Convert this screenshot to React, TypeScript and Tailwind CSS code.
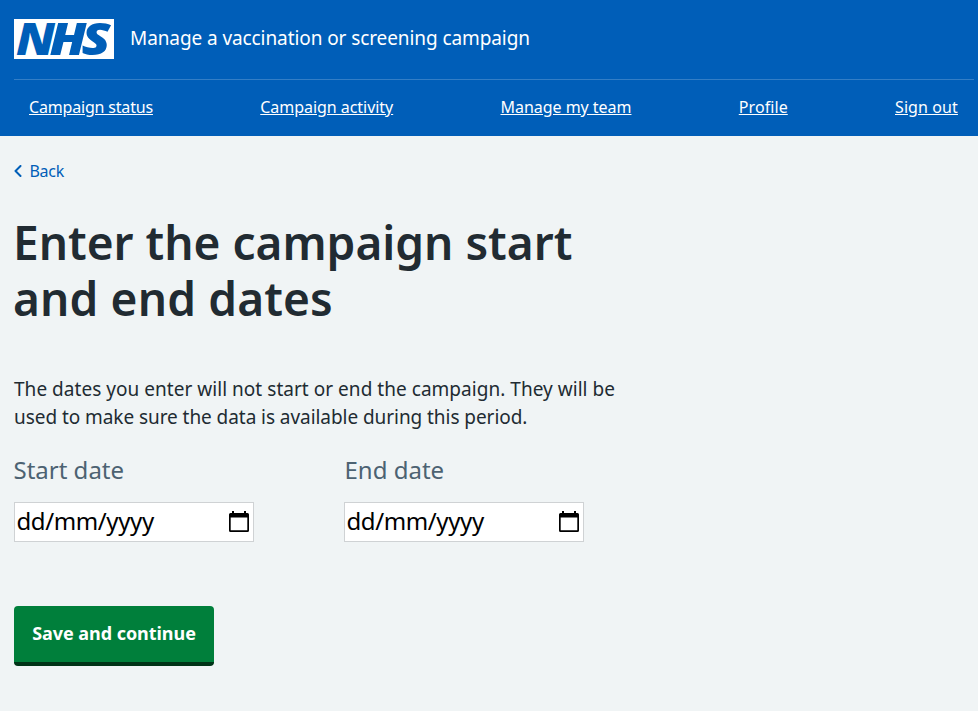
const navItems = [
  { label: 'Campaign status', width: 'w-[124px]', tracking: 'tracking-[-0.18px]' },
  { label: 'Campaign activity', width: 'w-[133px]', tracking: 'tracking-[-0.04px]' },
  { label: 'Manage my team', width: 'w-[131px]', tracking: 'tracking-[-0.03px]' },
  { label: 'Profile', width: 'w-[49px]', tracking: 'tracking-[0.08px]' },
  { label: 'Sign out', width: 'w-[63px]', tracking: 'tracking-[0.1px]' },
];

function NhsLogo() {
  return (
    <svg width="100" height="40" viewBox="0 0 100 40" className="block overflow-visible" aria-label="NHS">
      <rect width="100" height="40" fill="#fff" />
      <g className="fill-[#005eb8] font-['Noto_Sans',sans-serif] text-[45px] font-black italic">
        <text x="2" y="36" textLength="39" lengthAdjust="spacingAndGlyphs">N</text>
        <text x="35.500" y="36" textLength="37" lengthAdjust="spacingAndGlyphs">H</text>
        <text x="67.500" y="36" textLength="29" lengthAdjust="spacingAndGlyphs">S</text>
      </g>
    </svg>
  );
}

function CalendarIcon() {
  return (
    <svg width="20" height="21" viewBox="0 0 20 21" className="block">
      <path
        fillRule="evenodd"
        d="M3 0h2v2h10V0h2v2h1.500a1.500 1.500 0 0 1 1.500 1.500v16a1.500 1.500 0 0 1-1.500 1.500h-17A1.500 1.500 0 0 1 0 19.500v-16A1.500 1.500 0 0 1 1.500 2H3zM1.700 6.500v12.800h16.600V6.500z"
      />
    </svg>
  );
}

function DateField({ label, offset }: { label: string; offset: string }) {
  return (
    <div className="w-[240px]">
      <div className={`${offset} h-[36px] text-[24px] leading-[36px] whitespace-nowrap text-[#4c6272]`}>{label}</div>
      <div className="mt-[14px] flex h-10 items-start justify-between border border-[#cfd2d4] bg-white pr-1 pl-[1.5px] text-[24px] leading-[36px] text-black">
        <span className="tracking-[-0.4px]">dd/mm/yyyy</span>
        <div className="pt-2">
          <CalendarIcon />
        </div>
      </div>
    </div>
  );
}

export default function App() {
  return (
    <div className="min-h-[711px] w-[978px] overflow-hidden bg-[#f0f4f5] font-['Noto_Sans',sans-serif] text-[#212b32]">
      <header className="h-[136px] bg-[#005eb8] pl-3.5 text-white">
        <div className="flex h-[79px] items-start gap-4 pt-[19px]">
          <NhsLogo />
          <span className="mt-[5px] text-[19px] leading-7 tracking-[-0.09px] whitespace-nowrap">
            Manage a vaccination or screening campaign
          </span>
        </div>
        <nav className="mr-1 flex h-[57px] justify-between border-t border-[#337ec6] pt-[15px] pr-4 pl-[15px]">
          {navItems.map((item) => (
            <a
              key={item.label}
              href="#"
              className={`${item.width} ${item.tracking} text-[16px] leading-6 whitespace-nowrap underline`}
            >
              {item.label}
            </a>
          ))}
        </nav>
      </header>
      <main className="px-3.5 pt-[23px]">
        <a href="#" className="flex h-6 items-center text-[16px] leading-6 tracking-[-0.3px] text-[#005eb8]">
          <svg width="8" height="12" viewBox="0 0 8 12" fill="none" className="mr-[7.5px]">
            <path d="M6.500 1 1.500 6l5 5" stroke="currentColor" strokeWidth="2" strokeLinecap="round" strokeLinejoin="round" />
          </svg>
          Back
        </a>
        <h1 className="mt-[31px] -ml-px text-[46px] leading-[56px] font-[650] whitespace-nowrap">
          <span className="block h-14 tracking-[0px]">Enter the campaign start</span>
          <span className="block h-14 tracking-[0.15px]">and end dates</span>
        </h1>
        <p className="mt-[49px] text-[19px] leading-7 whitespace-nowrap">
          <span className="tracking-[0.035px]">The dates you enter will not start or end the campaign. They will be</span>
          <br />
          <span className="tracking-[-0.06px]">used to make sure the data is available during this period.</span>
        </p>
        <div className="mt-[21px] flex gap-[90px]">
          <DateField label="Start date" offset="-ml-[0.5px]" />
          <DateField label="End date" offset="ml-[0.5px]" />
        </div>
        <button className="mt-16 flex h-[60px] w-[200px] items-start justify-center rounded border-b-4 border-[#003317] bg-[#007f3b] pt-[13px] text-[18px] leading-7 font-bold tracking-[-0.05px] whitespace-nowrap text-white">
          Save and continue
        </button>
      </main>
    </div>
  );
}
